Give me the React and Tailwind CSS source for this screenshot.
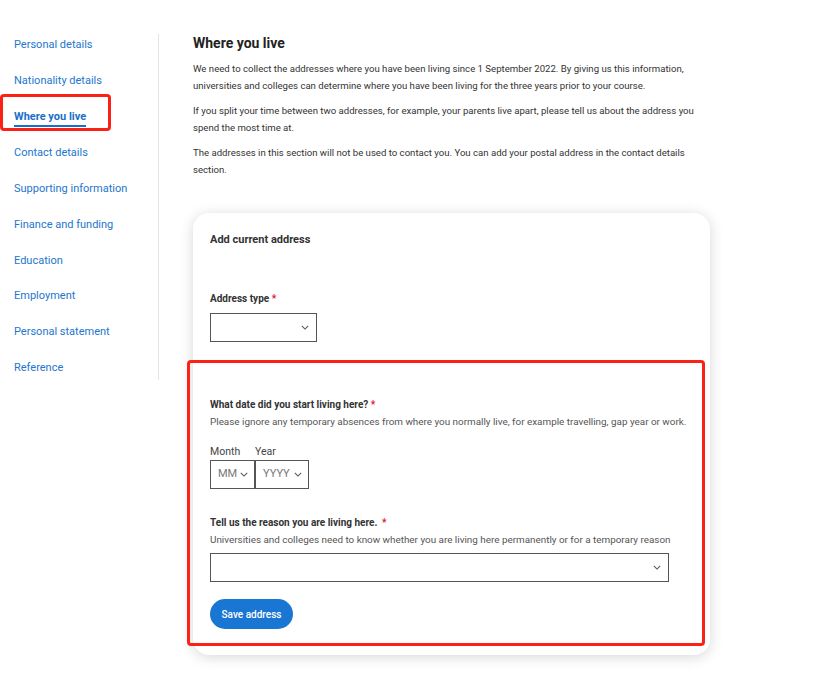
import React from "react";

const navItems = [
  "Personal details",
  "Nationality details",
  "Where you live",
  "Contact details",
  "Supporting information",
  "Finance and funding",
  "Education",
  "Employment",
  "Personal statement",
  "Reference",
];

function Chevron({ className = "" }) {
  return (
    <svg viewBox="0 0 10 6" className={className} fill="none" stroke="currentColor" strokeWidth="1.3">
      <path d="M1 1l4 4 4-4" />
    </svg>
  );
}

function Select({ className = "", placeholder }) {
  return (
    <div className={"flex h-[29px] items-center justify-between border border-[#555] bg-white " + className}>
      <span className="text-[11px] text-[#777]">{placeholder}</span>
      <Chevron className="h-[5px] w-[8px] text-[#555]" />
    </div>
  );
}

export default function App() {
  return (
    <div className="flex min-h-[679px] w-[827px] bg-white font-['Roboto',sans-serif]">
      <nav className="flex w-[158px] flex-col pt-[27.5px]">
        {navItems.map((item) => {
          const active = item === "Where you live";
          return (
            <div key={item} className="relative flex h-[35.9px] items-center pl-[14px]">
              {active ? (
                <>
                  <span className="mt-[3px] border-b-2 border-[#1a6fc8] pb-[1px] text-[11px] font-bold leading-[14px] text-[#1a6fc8]">
                    {item}
                  </span>
                  <div className="absolute left-0 top-[-5.5px] h-[37px] w-[111px] rounded-[4px] border-[3px] border-[#fb2215]" />
                </>
              ) : (
                <span className="text-[11px] text-[#2376cc]">{item}</span>
              )}
            </div>
          );
        })}
      </nav>
      <div className="mt-[34px] h-[346px] w-px bg-[#e3e3e3]" />
      <main className="ml-[34px] flex w-[525px] flex-col pt-[33px]">
        <h1 className="text-[14px] font-bold leading-5 text-[#222]">Where you live</h1>
        <div className="mt-2 flex flex-col gap-[9px] text-[9.6px] leading-[16.5px] text-[#333]">
          <p>
            We need to collect the addresses where you have been living since 1 September 2022. By giving us this information,
            universities and colleges can determine where you have been living for the three years prior to your course.
          </p>
          <p>
            If you split your time between two addresses, for example, your parents live apart, please tell us about the address you
            spend the most time at.
          </p>
          <p>
            The addresses in this section will not be used to contact you. You can add your postal address in the contact details
            section.
          </p>
        </div>

        <section className="relative mt-[35px] w-[517px] rounded-[16px] bg-white pb-[26px] pl-[17px] pt-[19px] shadow-[0_2px_14px_rgba(0,0,0,0.16)]">
          <h2 className="text-[11px] font-bold leading-4 text-[#333]">Add current address</h2>

          <div className="mt-[43px] text-[10px] font-bold leading-4 text-[#333]">
            Address type <span className="text-[#e0123a]">*</span>
          </div>
          <Select className="mt-[6px] w-[107px] pr-[7px]" />

          <div className="mt-[55px] text-[10px] font-bold leading-4 text-[#333]">
            What date did you start living here? <span className="text-[#e0123a]">*</span>
          </div>
          <div className="mt-[1px] text-[9.9px] leading-4 text-[#555]">
            Please ignore any temporary absences from where you normally live, for example travelling, gap year or work.
          </div>
          <div className="mt-[14px] flex">
            <div className="flex w-[45px] flex-col">
              <span className="text-[10.5px] leading-4 text-[#444]">Month</span>
              <Select className="w-[45px] pl-[7px] pr-[6px]" placeholder="MM" />
            </div>
            <div className="flex w-[54px] flex-col">
              <span className="text-[10.5px] leading-4 text-[#444]">Year</span>
              <Select className="w-[54px] pl-[7px] pr-[6px]" placeholder="YYYY" />
            </div>
          </div>

          <div className="mt-[26px] text-[10px] font-bold leading-4 text-[#333]">
            Tell us the reason you are living here. <span className="ml-[2px] text-[#e0123a]">*</span>
          </div>
          <div className="mt-[1px] text-[9.9px] leading-4 text-[#555]">
            Universities and colleges need to know whether you are living here permanently or for a temporary reason
          </div>
          <Select className="mt-[5px] w-[459px] pr-[7px]" />

          <button className="mt-[17px] flex h-[30px] w-[83px] items-center justify-center rounded-full bg-[#1976d2] text-[10px] font-medium text-white">
            Save address
          </button>

          <div className="absolute bottom-[9px] left-[-6px] right-[5px] top-[147px] rounded-[4px] border-[3px] border-[#fb2215]" />
        </section>
      </main>
    </div>
  );
}
